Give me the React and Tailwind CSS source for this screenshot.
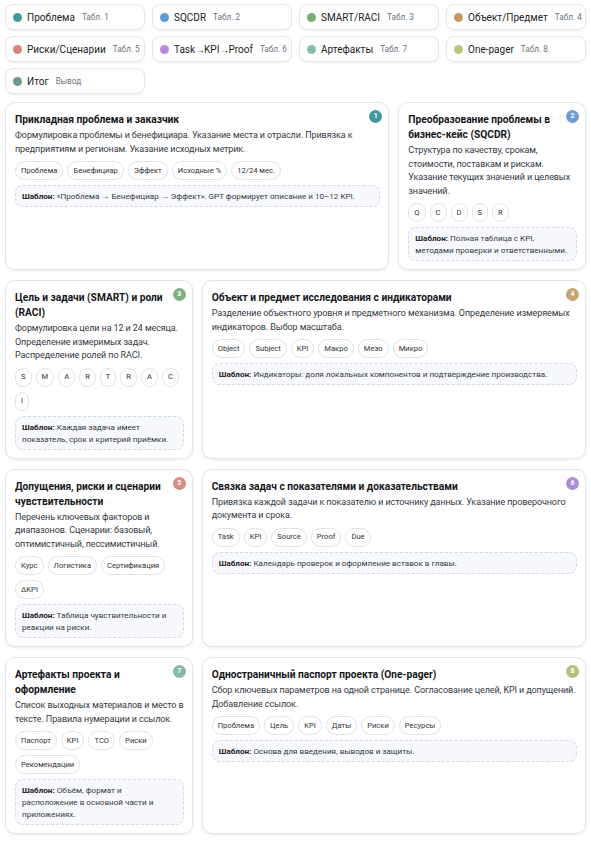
const nav = [
  { label: 'Проблема', tab: 'Табл. 1', dot: 'bg-[#3f9a9c]' },
  { label: 'SQCDR', tab: 'Табл. 2', dot: 'bg-[#5f9bd6]' },
  { label: 'SMART/RACI', tab: 'Табл. 3', dot: 'bg-[#78ad78]' },
  { label: 'Объект/Предмет', tab: 'Табл. 4', dot: 'bg-[#c49a5c]' },
  { label: 'Риски/Сценарии', tab: 'Табл. 5', dot: 'bg-[#d8857c]' },
  { label: 'Task→KPI→Proof', tab: 'Табл. 6', dot: 'bg-[#b58be0]' },
  { label: 'Артефакты', tab: 'Табл. 7', dot: 'bg-[#86bdb0]' },
  { label: 'One-pager', tab: 'Табл. 8', dot: 'bg-[#b9c47e]' },
  { label: 'Итог', tab: 'Вывод', dot: 'bg-[#6f9990]' },
]

const cards = [
  {
    n: 1,
    span: 'col-span-2',
    badge: 'bg-[#3f9a9c]',
    title: 'Прикладная проблема и заказчик',
    desc: 'Формулировка проблемы и бенефициара. Указание места и отрасли. Привязка к предприятиям и регионам. Указание исходных метрик.',
    tags: ['Проблема', 'Бенефициар', 'Эффект', 'Исходные %', '12/24 мес.'],
    tpl: '«Проблема → Бенефициар → Эффект». GPT формирует описание и 10–12 KPI.',
  },
  {
    n: 2,
    span: '',
    badge: 'bg-[#6d9fd3]',
    title: 'Преобразование проблемы в бизнес-кейс (SQCDR)',
    desc: 'Структура по качеству, срокам, стоимости, поставкам и рискам. Указание текущих значений и целевых значений.',
    tags: ['Q', 'C', 'D', 'S', 'R'],
    tpl: 'Полная таблица с KPI, методами проверки и ответственными.',
  },
  {
    n: 3,
    span: '',
    badge: 'bg-[#7db47d]',
    title: 'Цель и задачи (SMART) и роли (RACI)',
    desc: 'Формулировка цели на 12 и 24 месяца. Определение измеримых задач. Распределение ролей по RACI.',
    tags: ['S', 'M', 'A', 'R', 'T', 'R', 'A', 'C', 'I'],
    tpl: 'Каждая задача имеет показатель, срок и критерий приёмки.',
  },
  {
    n: 4,
    span: 'col-span-2',
    badge: 'bg-[#c6a66c]',
    title: 'Объект и предмет исследования с индикаторами',
    desc: 'Разделение объектного уровня и предметного механизма. Определение измеряемых индикаторов. Выбор масштаба.',
    tags: ['Object', 'Subject', 'KPI', 'Макро', 'Мезо', 'Микро'],
    tpl: 'Индикаторы: доля локальных компонентов и подтверждение производства.',
  },
  {
    n: 5,
    span: '',
    badge: 'bg-[#d88a84]',
    title: 'Допущения, риски и сценарии чувствительности',
    desc: 'Перечень ключевых факторов и диапазонов. Сценарии: базовый, оптимистичный, пессимистичный.',
    tags: ['Курс', 'Логистика', 'Сертификация', 'ΔKPI'],
    tpl: 'Таблица чувствительности и реакции на риски.',
  },
  {
    n: 6,
    span: 'col-span-2',
    badge: 'bg-[#ab8fd6]',
    title: 'Связка задач с показателями и доказательствами',
    desc: 'Привязка каждой задачи к показателю и источнику данных. Указание проверочного документа и срока.',
    tags: ['Task', 'KPI', 'Source', 'Proof', 'Due'],
    tpl: 'Календарь проверок и оформление вставок в главы.',
  },
  {
    n: 7,
    span: '',
    badge: 'bg-[#84b9a9]',
    title: 'Артефакты проекта и оформление',
    desc: 'Список выходных материалов и место в тексте. Правила нумерации и ссылок.',
    tags: ['Паспорт', 'KPI', 'TCO', 'Риски', 'Рекомендации'],
    tpl: 'Объём, формат и расположение в основной части и приложениях.',
  },
  {
    n: 8,
    span: 'col-span-2',
    badge: 'bg-[#b7c27f]',
    title: 'Одностраничный паспорт проекта (One-pager)',
    desc: 'Сбор ключевых параметров на одной странице. Согласование целей, KPI и допущений. Добавление ссылок.',
    tags: ['Проблема', 'Цель', 'KPI', 'Даты', 'Риски', 'Ресурсы'],
    tpl: 'Основа для введения, выводов и защиты.',
  },
]

// arrows in the tab labels sit tighter than the font draws them
function Label({ text }) {
  const parts = text.split('→')
  return parts.map((p, i) => (
    <span key={i}>
      {i > 0 && <span className="tracking-[-3px]">→</span>}
      {i > 0 && <span className="inline-block w-[2px]"></span>}
      {p}
    </span>
  ))
}

export default function App() {
  return (
    <div className="min-h-screen bg-white px-[5px] pt-[4px] pb-[6px] font-['Roboto',sans-serif] text-[#1f2328]">
      <div className="grid grid-cols-4 gap-x-[7px] gap-y-[6px]">
        {nav.map((item) => (
          <div
            key={item.label}
            className="h-[26px] flex items-center pl-[7px] pr-[6px] rounded-lg border border-[#e3e6eb] bg-white shadow-[0_1px_2px_rgba(0,0,0,0.05)]"
          >
            <span className={`w-[9px] h-[9px] rounded-full shrink-0 ${item.dot}`}></span>
            <span className="ml-[5px] text-[10px] text-[#222] whitespace-nowrap">
              <Label text={item.label} />
            </span>
            <span className="ml-[7px] text-[8.2px] text-[#6b7280] whitespace-nowrap">{item.tab}</span>
          </div>
        ))}
      </div>

      <div className="mt-[8px] grid grid-cols-3 gap-x-[9px] gap-y-[10px]">
        {cards.map((card) => (
          <div
            key={card.n}
            className={`${card.span} relative rounded-[10px] border border-[#e2e5ea] bg-white pl-[9px] pr-[8px] pt-[9px] pb-[8px] shadow-[0_1px_3px_rgba(0,0,0,0.08)]`}
          >
            <span className={`absolute top-[7px] right-[6px] w-[13px] h-[13px] rounded-full flex items-center justify-center text-[7px] font-bold text-white ${card.badge}`}>
              {card.n}
            </span>
            <h2 className="pr-[3px] text-[10.2px] font-bold leading-[15px] text-[#15171a]">{card.title}</h2>
            <p className="mt-[2px] text-[9px] tracking-[-0.1px] leading-[13.5px] text-[#353a42]">{card.desc}</p>
            <div className="mt-[5px] flex flex-wrap gap-x-[4px] gap-y-[5px]">
              {card.tags.map((t, i) => (
                <span
                  key={i}
                  className="h-[19px] px-[5px] flex items-center rounded-full border border-[#dfe2e7] bg-white text-[7.6px] text-[#333]"
                >
                  {t}
                </span>
              ))}
            </div>
            <div className="mt-[5px] rounded-lg border border-dashed border-[#d3dae5] bg-[#f6f8fc] px-[6px] py-[4px] text-[8.1px] leading-[12px] text-[#353a42]">
              <span className="font-bold text-[#222]">Шаблон:</span> {card.tpl}
            </div>
          </div>
        ))}
      </div>
    </div>
  )
}
